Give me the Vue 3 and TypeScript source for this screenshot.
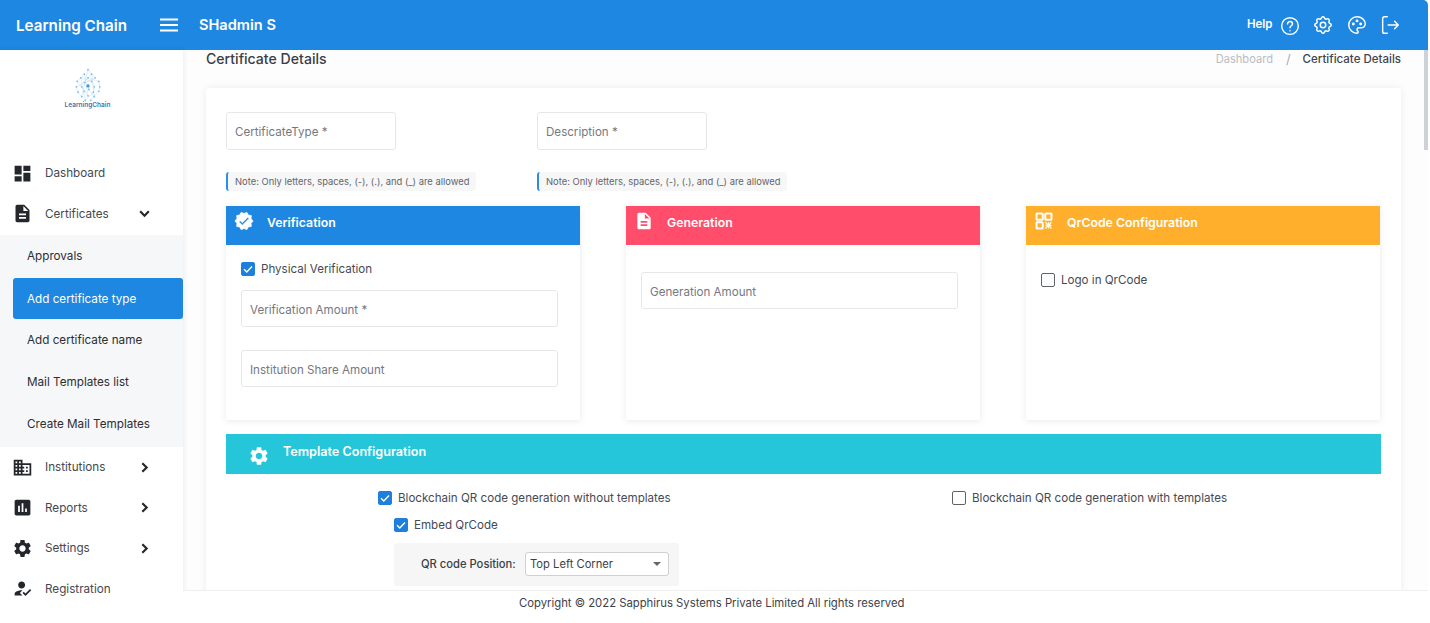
<script setup lang="ts">
interface NavItem { label: string; icon: string; chevron?: 'down' | 'right' }
const paths: Record<string, string> = {
  dashboard: 'M3 13h8V3H3v10zm0 8h8v-6H3v6zm10 0h8V11h-8v10zm0-18v6h8V3h-8z',
  description: 'M14 2H6c-1.1 0-1.99.9-1.99 2L4 20c0 1.1.89 2 1.99 2H18c1.1 0 2-.9 2-2V8l-6-6zm2 16H8v-2h8v2zm0-4H8v-2h8v2zm-3-5V3.5L18.5 9H13z',
  domain: 'M12 7V3H2v18h20V7H12zM6 19H4v-2h2v2zm0-4H4v-2h2v2zm0-4H4V9h2v2zm0-4H4V5h2v2zm4 12H8v-2h2v2zm0-4H8v-2h2v2zm0-4H8V9h2v2zm0-4H8V5h2v2zm10 12h-8v-2h2v-2h-2v-2h2v-2h-2V9h8v10zm-2-8h-2v2h2v-2zm0 4h-2v2h2v-2z',
  assessment: 'M19 3H5c-1.1 0-2 .9-2 2v14c0 1.1.9 2 2 2h14c1.1 0 2-.9 2-2V5c0-1.1-.9-2-2-2zM9 17H7v-7h2v7zm4 0h-2V7h2v10zm4 0h-2v-4h2v4z',
  settings: 'M19.14 12.94c.04-.3.06-.61.06-.94 0-.32-.02-.64-.07-.94l2.03-1.58c.18-.14.23-.41.12-.61l-1.92-3.32c-.12-.22-.37-.29-.59-.22l-2.39.96c-.5-.38-1.03-.7-1.62-.94l-.36-2.54c-.04-.24-.24-.41-.48-.41h-3.84c-.24 0-.43.17-.47.41l-.36 2.54c-.59.24-1.13.57-1.62.94l-2.39-.96c-.22-.08-.47 0-.59.22L2.74 8.87c-.12.21-.08.47.12.61l2.03 1.58c-.05.3-.09.63-.09.94s.02.64.07.94l-2.03 1.58c-.18.14-.23.41-.12.61l1.92 3.32c.12.22.37.29.59.22l2.39-.96c.5.38 1.03.7 1.62.94l.36 2.54c.05.24.24.41.48.41h3.84c.24 0 .44-.17.47-.41l.36-2.54c.59-.24 1.13-.56 1.62-.94l2.39.96c.22.08.47 0 .59-.22l1.92-3.32c.12-.22.07-.47-.12-.61l-2.01-1.58zM12 15.6c-1.98 0-3.6-1.62-3.6-3.6s1.62-3.6 3.6-3.6 3.6 1.62 3.6 3.6-1.62 3.6-3.6 3.6z',
  reg: 'M9 17l3-2.94c-.39-.04-.68-.06-1-.06-2.67 0-8 1.34-8 4v2h9l-3-3zm2-5c2.21 0 4-1.79 4-4s-1.79-4-4-4-4 1.79-4 4 1.79 4 4 4zm4.47 8.5L12 17l1.4-1.41 2.07 2.08 5.13-5.17 1.4 1.41z',
  verified: 'M23 12l-2.44-2.78.34-3.68-3.61-.82-1.89-3.18L12 3 8.6 1.54 6.71 4.72l-3.61.81.34 3.68L1 12l2.44 2.78-.34 3.69 3.61.82 1.89 3.18L12 21l3.4 1.46 1.89-3.18 3.61-.82-.34-3.68L23 12zm-13 5l-4-4 1.41-1.41L10 14.17l6.59-6.59L18 9l-8 8z',
}
const topNav: NavItem[] = [
  { label: 'Dashboard', icon: 'dashboard' },
  { label: 'Certificates', icon: 'description', chevron: 'down' },
]
const subNav = ['Approvals', 'Add certificate type', 'Add certificate name', 'Mail Templates list', 'Create Mail Templates']
const bottomNav: NavItem[] = [
  { label: 'Institutions', icon: 'domain', chevron: 'right' },
  { label: 'Reports', icon: 'assessment', chevron: 'right' },
  { label: 'Settings', icon: 'settings', chevron: 'right' },
  { label: 'Registration', icon: 'reg' },
]
const note = 'Note: Only letters, spaces, (-), (.), and (_) are allowed'
const logoDots: [number, number][] = [
  [24, 3], [20, 8], [28, 8], [16, 12], [24, 12], [32, 12], [12, 16], [20, 17], [28, 16], [36, 16],
  [11, 22], [17, 22], [24, 21], [31, 22], [37, 22], [13, 28], [20, 27], [25, 25], [30, 28], [36, 27],
  [17, 33], [24, 32], [31, 33], [21, 37], [27, 37],
]
const logoLines = logoDots.slice(0, -1).map((d, i) => [d, logoDots[(i + 5) % logoDots.length]])
</script>

<template>
  <div class="page">
    <header class="topbar">
      <span class="brand">Learning Chain</span>
      <svg class="burger" viewBox="0 0 20 14" width="20" height="14"><path d="M1 1.5h18M1 7h18M1 12.5h18" stroke="#fff" stroke-width="2"/></svg>
      <span class="user">SHadmin S</span>
      <div class="tools">
        <span class="help">Help</span>
        <svg class="tool q" viewBox="0 0 24 24"><circle cx="12" cy="12" r="10"/><path d="M9 9.5a3 3 0 0 1 6 0c0 2-3 2.5-3 4.5"/><path d="M12 17.5v.1"/></svg>
        <svg class="tool" viewBox="0 0 24 24"><path d="M10.325 4.317c.426 -1.756 2.924 -1.756 3.35 0a1.724 1.724 0 0 0 2.573 1.066c1.543 -.94 3.31 .826 2.37 2.37a1.724 1.724 0 0 0 1.065 2.572c1.756 .426 1.756 2.924 0 3.35a1.724 1.724 0 0 0 -1.066 2.573c.94 1.543 -.826 3.31 -2.37 2.37a1.724 1.724 0 0 0 -2.572 1.065c-.426 1.756 -2.924 1.756 -3.35 0a1.724 1.724 0 0 0 -2.573 -1.066c-1.543 .94 -3.31 -.826 -2.37 -2.37a1.724 1.724 0 0 0 -1.065 -2.572c-1.756 -.426 -1.756 -2.924 0 -3.35a1.724 1.724 0 0 0 1.066 -2.573c-.94 -1.543 .826 -3.31 2.37 -2.37c1 .608 2.296 .07 2.572 -1.065z"/><circle cx="12" cy="12" r="3"/></svg>
        <svg class="tool" viewBox="0 0 24 24"><path d="M12 21a9 9 0 0 1 0 -18c4.97 0 9 3.582 9 8c0 1.06 -.474 2.078 -1.318 2.828c-.844 .75 -1.989 1.172 -3.182 1.172h-2.5a2 2 0 0 0 -1 3.75a1.3 1.3 0 0 1 -1 2.25"/><circle cx="8" cy="11" r=".8"/><circle cx="12" cy="7.5" r=".8"/><circle cx="16" cy="11" r=".8"/></svg>
        <svg class="tool" viewBox="0 0 24 24"><path d="M9 3H6a2 2 0 0 0-2 2v14a2 2 0 0 0 2 2h3"/><path d="M10 12h11M17 8l4 4-4 4"/></svg>
      </div>
    </header>

    <div class="shell">
      <aside class="sidebar">
        <div class="logo">
          <svg viewBox="0 0 48 40" width="44" height="36">
            <line v-for="(l, i) in logoLines" :key="'l' + i" :x1="l[0][0]" :y1="l[0][1]" :x2="l[1][0]" :y2="l[1][1]" stroke="#bcdcf5" stroke-width=".6"/>
            <circle v-for="(d, i) in logoDots" :key="'d' + i" :cx="d[0]" :cy="d[1]" r="1" fill="#7dbdeb"/>
            <circle cx="24" cy="21" r="1.8" fill="#3f93d8"/>
          </svg>
          <span class="logo-text">LearningChain</span>
        </div>
        <nav class="nav">
          <div v-for="item in topNav" :key="item.label" class="nav-item">
            <svg class="nav-icon" viewBox="0 0 24 24"><path :d="paths[item.icon]"/></svg>
            <span class="nav-label">{{ item.label }}</span>
            <svg v-if="item.chevron === 'down'" class="chev" viewBox="0 0 12 12"><path d="M2 4l4 4 4-4"/></svg>
          </div>
          <div class="sub">
            <div v-for="(s, i) in subNav" :key="s" class="sub-item" :class="{ active: i === 1 }">{{ s }}</div>
          </div>
          <div v-for="item in bottomNav" :key="item.label" class="nav-item">
            <svg class="nav-icon" viewBox="0 0 24 24"><path :d="paths[item.icon]"/></svg>
            <span class="nav-label">{{ item.label }}</span>
            <svg v-if="item.chevron === 'right'" class="chev" viewBox="0 0 12 12"><path d="M4 2l4 4-4 4"/></svg>
          </div>
        </nav>
      </aside>

      <main class="main">
        <div class="scroll">
          <div class="title-row">
            <h1 class="title">Certificate Details</h1>
            <div class="crumbs">
              <span class="crumb-muted">Dashboard</span>
              <span class="crumb-sep">/</span>
              <span class="crumb-current">Certificate Details</span>
            </div>
          </div>

          <section class="card">
            <div class="fields">
              <div class="field">
                <input class="text-input small" placeholder="CertificateType *" />
                <div class="note">{{ note }}</div>
              </div>
              <div class="field">
                <input class="text-input small" placeholder="Description *" />
                <div class="note">{{ note }}</div>
              </div>
            </div>

            <div class="panels">
              <div class="panel">
                <div class="panel-head blue">
                  <svg class="head-icon round" viewBox="0 0 24 24"><path :d="paths.verified"/></svg>
                  <span>Verification</span>
                </div>
                <div class="panel-body verif">
                  <label class="check">
                    <span class="box on"><svg viewBox="0 0 14 14"><path d="M3 7.3l2.8 2.8L11 4.5"/></svg></span>
                    Physical Verification
                  </label>
                  <input class="text-input wide first" placeholder="Verification Amount *" />
                  <input class="text-input wide second" placeholder="Institution Share Amount" />
                </div>
              </div>

              <div class="panel">
                <div class="panel-head red">
                  <svg class="head-icon" viewBox="0 0 24 24"><path :d="paths.description"/></svg>
                  <span>Generation</span>
                </div>
                <div class="panel-body gen">
                  <input class="text-input wide" placeholder="Generation Amount" />
                </div>
              </div>

              <div class="panel">
                <div class="panel-head amber">
                  <svg class="head-icon qr" viewBox="0 0 24 24">
                    <rect x="3" y="3" width="7.5" height="7.5" rx="1"/>
                    <rect x="13.5" y="3" width="7.5" height="7.5" rx="1"/>
                    <rect x="3" y="13.5" width="7.5" height="7.5" rx="1"/>
                    <path d="M13.5 13.5l7.5 7.5M21 13.5l-7.5 7.5M17.25 13.5v7.5M13.5 17.25H21" stroke-width="1.4"/>
                  </svg>
                  <span>QrCode Configuration</span>
                </div>
                <div class="panel-body qrbody">
                  <label class="check">
                    <span class="box"></span>
                    Logo in QrCode
                  </label>
                </div>
              </div>
            </div>

            <div class="template">
              <div class="template-head">
                <svg class="gear" viewBox="0 0 24 24"><path :d="paths.settings"/></svg>
                <span>Template Configuration</span>
              </div>
              <div class="template-body">
                <div class="tcol">
                  <label class="check">
                    <span class="box on"><svg viewBox="0 0 14 14"><path d="M3 7.3l2.8 2.8L11 4.5"/></svg></span>
                    Blockchain QR code generation without templates
                  </label>
                  <div class="indent">
                    <label class="check embed">
                      <span class="box on"><svg viewBox="0 0 14 14"><path d="M3 7.3l2.8 2.8L11 4.5"/></svg></span>
                      Embed QrCode
                    </label>
                    <div class="qr-pos">
                      <span class="qr-label">QR code Position:</span>
                      <div class="select">
                        <span>Top Left Corner</span>
                        <svg viewBox="0 0 8 4" width="8" height="4"><path d="M0 0h8L4 4z" fill="#666"/></svg>
                      </div>
                    </div>
                  </div>
                </div>
                <div class="tcol">
                  <label class="check">
                    <span class="box"></span>
                    Blockchain QR code generation with templates
                  </label>
                </div>
              </div>
            </div>
          </section>
        </div>
        <footer class="footer">Copyright © 2022 Sapphirus Systems Private Limited All rights reserved</footer>
      </main>
    </div>
    <div class="scrollbar"></div>
  </div>
</template>

<style>
html, body { margin: 0; overflow: hidden; background: #fff; }
</style>

<style scoped>
.page {
  position: relative;
  width: 1428px;
  height: 623px;
  display: flex;
  flex-direction: column;
  overflow: hidden;
  font-family: Inter, "Noto Sans", sans-serif;
  color: #3d4149;
  font-size: 11px;
}
.topbar {
  flex: 0 0 50px;
  display: flex;
  align-items: center;
  background: #1e87e2;
  color: #fff;
  border-top-right-radius: 5px;
  box-sizing: border-box;
  padding-left: 16px;
}
.brand { width: 143px; font-size: 15.2px; font-weight: 600; }
.burger { margin-right: 20px; }
.user { font-size: 14.6px; font-weight: 600; }
.tools { margin-left: auto; display: flex; align-items: center; padding-right: 27px; gap: 11.5px; }
.help { font-size: 11.5px; font-weight: 600; margin-right: -5.500px; margin-top: -2px; }
.tool { width: 22px; height: 22px; fill: none; stroke: #fff; stroke-width: 1.6; stroke-linecap: round; stroke-linejoin: round; }
.tool.q { width: 20px; height: 20px; stroke-width: 1.7; margin: 2px 1px 0; }

.shell { flex: 1; display: flex; min-height: 0; }
.sidebar {
  flex: 0 0 183px;
  background: #fff;
  box-shadow: 1px 0 5px rgba(0, 0, 0, .07);
  position: relative;
  z-index: 1;
}
.logo { height: 103px; display: flex; flex-direction: column; align-items: center; padding: 17px 8px 0 0; box-sizing: border-box; }
.logo-text { font-size: 6.5px; font-weight: 600; color: #3f74a8; margin-top: -2px; }
.nav { display: flex; flex-direction: column; }
.nav-item { height: 40.5px; display: flex; align-items: center; padding-left: 11.5px; color: #454850; font-size: 11.7px; }
.nav-icon { width: 21px; height: 21px; fill: #23262b; flex: none; }
.nav-label { margin-left: 12.5px; width: 93px; }
.chev { width: 13px; height: 13px; fill: none; stroke: #23262b; stroke-width: 2; }
.sub { background: #f6f7f9; display: flex; flex-direction: column; height: 212px; box-sizing: border-box; margin-top: 1px; }
.sub-item { height: 42px; flex: none; display: flex; align-items: center; padding-left: 27px; font-size: 11.7px; color: #2b2e33; }
.sub-item.active { background: #1e87e2; color: #fff; margin: 1px 0 0 13px; padding-left: 14px; border-radius: 3px; height: 41px; }

.main { flex: 1; min-width: 0; display: flex; flex-direction: column; background: #fdfdfd; }
.scroll { flex: 1; min-height: 0; overflow: hidden; padding: 0 27px 0 23px; }
.title-row { display: flex; justify-content: space-between; align-items: center; height: 16px; margin-bottom: 22px; }
.title { margin: 0; font-size: 14.1px; font-weight: 500; color: #3a3e47; }
.crumbs { display: flex; align-items: center; font-size: 11.1px; margin-top: 2px; }
.crumb-muted { color: #b9bcc4; }
.crumb-sep { color: #a9adb5; margin: 0 12px 0 13px; font-size: 13px; }
.crumb-current { color: #40444d; font-weight: 500; font-size: 11.5px; }

.card { background: #fff; box-shadow: 0 0 8px rgba(0, 0, 0, .07); padding: 24px 20px 0; border-radius: 3px; height: 540px; box-sizing: border-box; }
.fields { display: grid; grid-template-columns: 311px 311px; }
.field { display: flex; flex-direction: column; align-items: flex-start; }
.text-input {
  display: block;
  box-sizing: border-box;
  border: 1px solid #e6e7ea;
  border-radius: 3px;
  background: #fff;
  font: inherit;
  font-size: 11.6px;
  padding: 2px 8px 0;
  outline: none;
}
.text-input::placeholder { color: #75787f; opacity: 1; }
.small { width: 170px; height: 38px; }
.wide { width: 317px; height: 37px; }
.note {
  margin-top: 22px;
  height: 19px;
  width: 250px;
  box-sizing: border-box;
  line-height: 19px;
  padding-left: 7px;
  background: #f7f7f8;
  border-left: 2px solid #2a8ee6;
  border-radius: 3px;
  font-size: 9.4px;
  color: #62656c;
  white-space: nowrap;
}
.panels { display: grid; grid-template-columns: repeat(3, 354px); column-gap: 46px; margin-top: 15px; }
.panel { height: 214px; background: #fff; box-shadow: 0 1px 7px rgba(0, 0, 0, .09); }
.panel-head { height: 39px; display: flex; align-items: center; color: #fff; font-size: 12.3px; font-weight: 600; padding: 0 0 6px 41px; position: relative; box-sizing: border-box; }
.blue { background: #1e87e2; }
.red { background: #ff4d6b; }
.amber { background: #ffaf2b; }
.head-icon { position: absolute; left: 8px; top: 5px; width: 20px; height: 20px; fill: #fff; }
.head-icon.round { stroke: #fff; stroke-width: .7; stroke-linejoin: round; }
.head-icon.qr { fill: none; stroke: #fff; stroke-width: 2.4; }
.panel-body { padding: 0 22px 0 15px; }
.verif { padding-top: 17px; }
.first { margin-top: 14px; }
.second { margin-top: 23px; }
.gen { padding-top: 27px; }
.qrbody { padding-top: 28px; }
.check { display: flex; align-items: center; gap: 6px; font-size: 11.6px; color: #454a54; height: 14px; }
.box { flex: none; width: 14px; height: 14px; box-sizing: border-box; border: 1.5px solid #5f6368; border-radius: 2px; display: flex; }
.box.on { background: #1e7fdc; border-color: #1e7fdc; }
.box svg { position: relative; width: 14px; height: 14px; margin: -1.5px; fill: none; stroke: #fff; stroke-width: 1.4; }

.template { margin-top: 14px; }
.template-head { height: 40px; background: #26c6da; color: #fff; display: flex; align-items: center; padding: 0 0 5px 57px; box-sizing: border-box; font-size: 12.6px; font-weight: 600; position: relative; }
.gear { position: absolute; left: 22px; top: 11px; width: 22px; height: 22px; fill: #fff; }
.template-body { display: grid; grid-template-columns: 574px auto; padding: 17px 0 0 152px; background: #fff; }
.indent { margin-left: 16px; }
.embed { margin-top: 13px; }
.qr-pos { margin-top: 11px; width: 285px; height: 43px; background: #f6f6f6; border-radius: 3px; display: flex; align-items: center; padding: 0 0 2px 27px; box-sizing: border-box; }
.qr-label { width: 104px; font-size: 11.2px; color: #3a3e47; font-weight: 500; }
.select { width: 144px; height: 24px; box-sizing: border-box; border: 1px solid #cfd0d3; border-radius: 3px; background: #fff; display: flex; align-items: center; justify-content: space-between; padding: 0 7px 0 4px; font-size: 11.2px; color: #3a3e47; }

.footer { flex: 0 0 33px; box-sizing: border-box; border-top: 1px solid #eceef0; background: #fff; padding-left: 336px; line-height: 24px; font-size: 11.3px; color: #3d4149; white-space: nowrap; position: relative; z-index: 1; }
.scrollbar { position: absolute; right: 0; top: 50px; width: 4px; height: 100px; background: #cdd2d8; z-index: 2; }
</style>
